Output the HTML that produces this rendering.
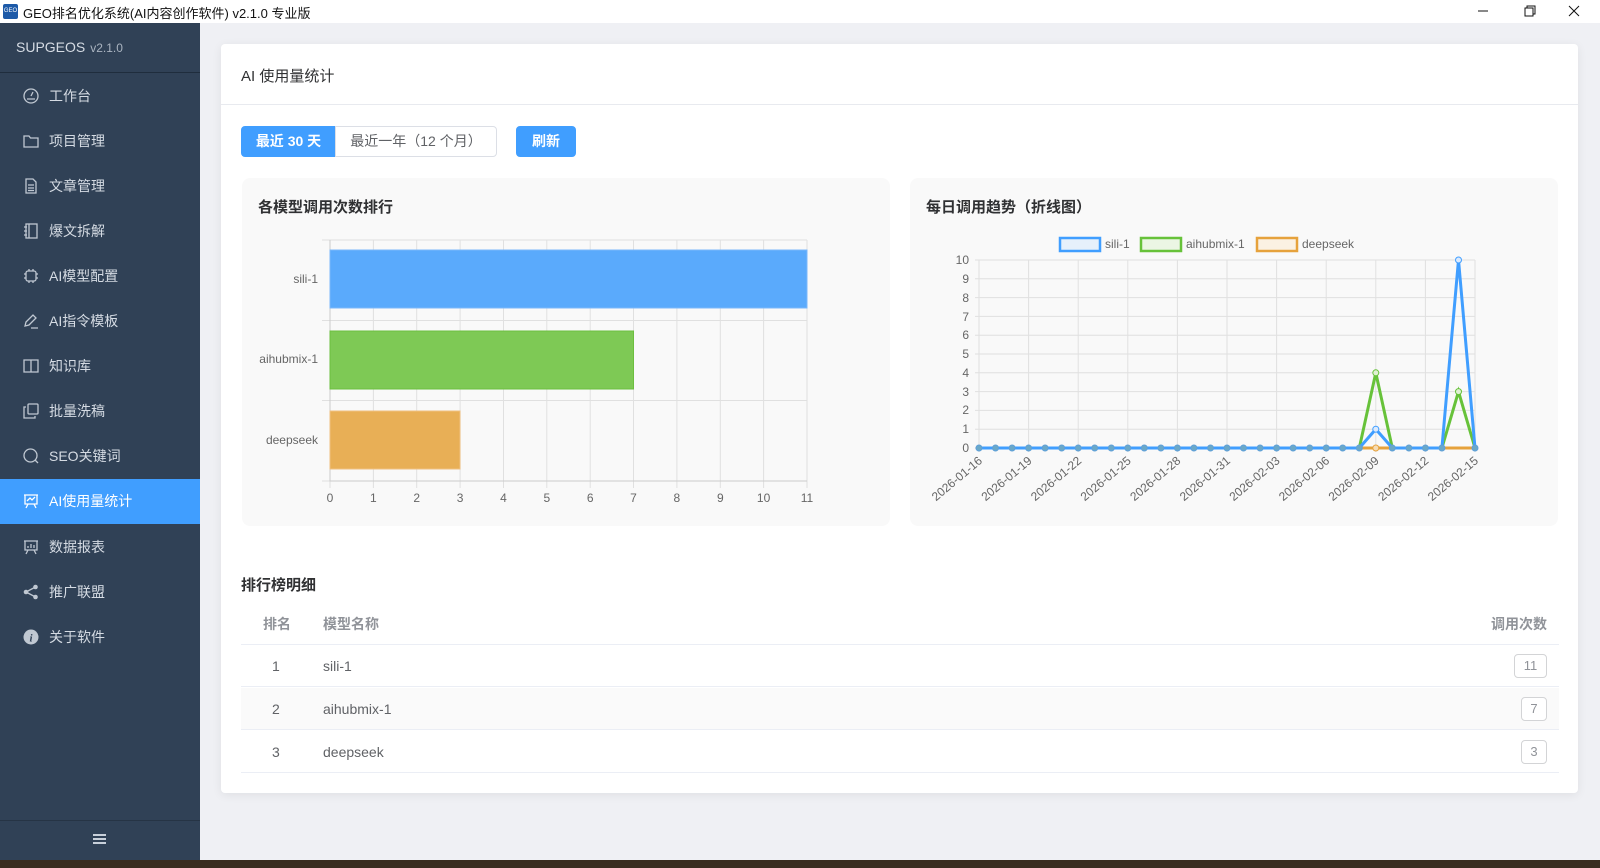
<!DOCTYPE html>
<html><head><meta charset="utf-8">
<style>
*{margin:0;padding:0;box-sizing:border-box}
body{width:1600px;height:868px;overflow:hidden;background:#eff0f4;font-family:"Liberation Sans","Noto Sans CJK SC",sans-serif;position:relative}
.tb{position:absolute;left:0;top:0;width:1600px;height:23px;background:#fff;font-size:13px;color:#111}
.tb .ic{position:absolute;left:3px;top:4px;width:15px;height:15px;background:#1d5aa8;border-radius:2px;color:#fff;font-size:6px;line-height:15px;text-align:center}
.tb .t{position:absolute;left:23px;top:3px}
.side{position:absolute;left:0;top:23px;width:200px;height:837px;background:#304156}
.brand{position:absolute;left:16px;top:16px;color:#d5dbe3;font-size:14px}
.brand span{font-size:12px;color:#aab4c0;margin-left:5px}
.sdiv{position:absolute;left:0;top:49px;width:200px;height:1px;background:#1f2d3d}
.mi{position:absolute;left:0;width:200px;height:45px;color:#d5dbe3;font-size:14px;line-height:45px;padding-left:49px}
.mi svg{position:absolute;left:23px;top:14px}
.mi.act{background:#409eff;color:#fff}
.bot{position:absolute;left:0;top:797px;width:200px;height:1px;background:#263445}
.ham{position:absolute;left:93px;top:811px;width:13px}
.ham i{display:block;height:2px;background:#c8d0da;margin-bottom:2px}
.task{position:absolute;left:0;top:860px;width:1600px;height:8px;background:#3a2c20}
.card{position:absolute;left:221px;top:44px;width:1357px;height:749px;background:#fff;border-radius:4px;box-shadow:0 2px 10px rgba(0,0,0,.07)}
.ch{position:absolute;left:20px;top:21px;font-size:15px;color:#303133}
.cdiv{position:absolute;left:0;top:60px;width:1357px;height:1px;background:#e8eaef}
.btn{position:absolute;top:126px;height:31px;font-size:14px;line-height:29px;text-align:center;border:1px solid #dcdfe6}
.panel{position:absolute;top:178px;width:648px;height:348px;background:#f9f9f9;border-radius:8px}
.pt{position:absolute;left:16px;top:18px;font-size:15px;font-weight:bold;color:#303133}
.row{position:absolute;left:241px;width:1318px;height:42px;border-bottom:1px solid #ebeef5;font-size:14px;color:#606266;line-height:42px}
.bd{position:absolute;right:12px;top:9px;height:24px;border:1px solid #d3d4d6;border-radius:4px;font-size:13px;color:#909399;line-height:22px;text-align:center;background:#fff}
</style></head><body>
<div class="tb"><div class="ic">GEO</div><div class="t">GEO排名优化系统(AI内容创作软件) v2.1.0 专业版</div>
<svg style="position:absolute;left:1470px;top:0" width="130" height="23"><line x1="8" y1="11" x2="18" y2="11" stroke="#111"/><rect x="55" y="8" width="8" height="8" fill="none" stroke="#111"/><path d="M57 8V6h8v8h-2" fill="none" stroke="#111"/><path d="M99 6l10 10M109 6l-10 10" stroke="#111"/></svg></div>

<div class="side">
<div class="brand">SUPGEOS<span>v2.1.0</span></div>
<div class="sdiv"></div>
<div class="mi" style="top:51px"><svg width="16" height="16" fill="none" stroke="#c0c8d2" stroke-width="1.3"><circle cx="8" cy="8" r="7"/><path d="M8 8l2-4M4 11h8"/></svg>工作台</div>
<div class="mi" style="top:96px"><svg width="16" height="16" fill="none" stroke="#c0c8d2" stroke-width="1.3"><path d="M1 3h5l1.5 2H15v9H1z"/></svg>项目管理</div>
<div class="mi" style="top:141px"><svg width="16" height="16" fill="none" stroke="#c0c8d2" stroke-width="1.3"><path d="M3 1h7l3 3v11H3zM5 7h6M5 10h6M5 12.5h6"/></svg>文章管理</div>
<div class="mi" style="top:186px"><svg width="16" height="16" fill="none" stroke="#c0c8d2" stroke-width="1.3"><rect x="3" y="1" width="11" height="14"/><path d="M6 1v14M1 4h3M1 8h3M1 12h3"/></svg>爆文拆解</div>
<div class="mi" style="top:231px"><svg width="16" height="16" fill="none" stroke="#c0c8d2" stroke-width="1.3"><rect x="3" y="3" width="10" height="10" rx="2"/><path d="M6 1v2M10 1v2M6 13v2M10 13v2M1 6h2M1 10h2M13 6h2M13 10h2"/></svg>AI模型配置</div>
<div class="mi" style="top:276px"><svg width="16" height="16" fill="none" stroke="#c0c8d2" stroke-width="1.3"><path d="M2 13l1-4 7-7 3 3-7 7zM8 15h7"/></svg>AI指令模板</div>
<div class="mi" style="top:321px"><svg width="16" height="16" fill="none" stroke="#c0c8d2" stroke-width="1.3"><path d="M1 2h14v12H1zM8 2v12"/></svg>知识库</div>
<div class="mi" style="top:366px"><svg width="16" height="16" fill="none" stroke="#c0c8d2" stroke-width="1.3"><rect x="5" y="1" width="10" height="10" rx="1"/><path d="M3 4H1v11h11v-2"/></svg>批量洗稿</div>
<div class="mi" style="top:411px"><svg width="16" height="16" fill="none" stroke="#c0c8d2" stroke-width="1.3"><circle cx="7.5" cy="7.5" r="6.5"/><path d="M12 12l3 3"/></svg>SEO关键词</div>
<div class="mi act" style="top:456px"><svg width="16" height="16" fill="none" stroke="#fff" stroke-width="1.3"><path d="M1 2h14M2 2v9h12V2M5 11l-2 4M11 11l2 4M4 8l3-3 2 2 3-3"/></svg>AI使用量统计</div>
<div class="mi" style="top:502px"><svg width="16" height="16" fill="none" stroke="#c0c8d2" stroke-width="1.3"><path d="M1 2h14M2 2v9h12V2M5 11l-2 4M11 11l2 4M5 9V7M8 9V5M11 9V6"/></svg>数据报表</div>
<div class="mi" style="top:547px"><svg width="16" height="16" fill="#c0c8d2"><circle cx="12.5" cy="3" r="2.3"/><circle cx="3" cy="8" r="2.3"/><circle cx="12.5" cy="13" r="2.3"/><path d="M3 8L12.5 3M3 8l9.5 5" stroke="#c0c8d2" stroke-width="1.3"/></svg>推广联盟</div>
<div class="mi" style="top:592px"><svg width="16" height="16"><circle cx="8" cy="8" r="7.5" fill="#c0c8d2"/><text x="8" y="12.5" font-size="11" font-weight="bold" font-style="italic" text-anchor="middle" fill="#304156" font-family="Liberation Serif">i</text></svg>关于软件</div>
<div class="bot"></div>
<div class="ham"><i></i><i></i><i></i></div>
</div>
<div class="task"></div>

<div class="card"><div class="ch">AI 使用量统计</div><div class="cdiv"></div></div>
<div class="btn" style="left:241px;width:95px;background:#409eff;border-color:#409eff;color:#fff;border-radius:4px 0 0 4px;font-weight:bold">最近 30 天</div>
<div class="btn" style="left:335px;width:162px;background:#fff;color:#606266;border-radius:0 4px 4px 0">最近一年（12 个月）</div>
<div class="btn" style="left:516px;width:60px;background:#409eff;border-color:#409eff;color:#fff;border-radius:4px;font-weight:bold">刷新</div>

<div class="panel" style="left:242px"><div class="pt">各模型调用次数排行</div></div>
<div class="panel" style="left:910px"><div class="pt">每日调用趋势（折线图）</div></div>

<svg style="position:absolute;left:0;top:0" width="1600" height="868" font-family="Liberation Sans, sans-serif">
<g stroke="#e0e0e0" stroke-width="1">
<path d="M330 240V488M373.4 240V488M416.7 240V488M460.1 240V488M503.5 240V488M546.8 240V488M590.2 240V488M633.5 240V488M676.9 240V488M720.3 240V488M763.6 240V488M807 240V488"/>
<path d="M322 240H807M322 320.5H807M322 400.5H807M322 481H807"/>
</g>
<path d="M330 240V481H807" stroke="#ccc" fill="none"/>
<rect x="330" y="250" width="477" height="58" fill="#5aaafc" stroke="#7ab8fa"/>
<rect x="330" y="331" width="303.5" height="58" fill="#7ec955" stroke="#6cbf3f"/>
<rect x="330" y="411" width="130" height="58" fill="#e8af56" stroke="#f0c080"/>
<g font-size="12" fill="#666" text-anchor="end"><text x="318" y="283">sili-1</text><text x="318" y="363">aihubmix-1</text><text x="318" y="444">deepseek</text></g>
<g font-size="12" fill="#666" text-anchor="middle"><text x="330" y="502">0</text><text x="373.4" y="502">1</text><text x="416.7" y="502">2</text><text x="460.1" y="502">3</text><text x="503.5" y="502">4</text><text x="546.8" y="502">5</text><text x="590.2" y="502">6</text><text x="633.5" y="502">7</text><text x="676.9" y="502">8</text><text x="720.3" y="502">9</text><text x="763.6" y="502">10</text><text x="807" y="502">11</text></g>

<g font-size="12" fill="#666">
<rect x="1060" y="238" width="40" height="13" fill="#e6f0fb" stroke="#409eff" stroke-width="2.5"/><text x="1105" y="248">sili-1</text>
<rect x="1141" y="238" width="40" height="13" fill="#ebf6e4" stroke="#67c23a" stroke-width="2.5"/><text x="1186" y="248">aihubmix-1</text>
<rect x="1257" y="238" width="40" height="13" fill="#fbf1e3" stroke="#e6a23c" stroke-width="2.5"/><text x="1302" y="248">deepseek</text>
</g>
<g stroke="#e0e0e0">
<path d="M975 260H1475M975 278.8H1475M975 297.6H1475M975 316.4H1475M975 335.2H1475M975 354H1475M975 372.8H1475M975 391.6H1475M975 410.4H1475M975 429.2H1475"/>
<path d="M979 260V452M1028.6 260V452M1078.2 260V452M1127.8 260V452M1177.4 260V452M1227 260V452M1276.6 260V452M1326.2 260V452M1375.8 260V452M1425.4 260V452M1475 260V452"/>
</g>
<path d="M975 448H1475" stroke="#ccc"/>
<g font-size="12" fill="#666" text-anchor="end"><text x="969" y="264">10</text><text x="969" y="283">9</text><text x="969" y="302">8</text><text x="969" y="321">7</text><text x="969" y="339">6</text><text x="969" y="358">5</text><text x="969" y="377">4</text><text x="969" y="396">3</text><text x="969" y="414">2</text><text x="969" y="433">1</text><text x="969" y="452">0</text></g>
<g font-size="12" fill="#666" text-anchor="end">
<text transform="translate(983,462) rotate(-40)">2026-01-16</text>
<text transform="translate(1032.6,462) rotate(-40)">2026-01-19</text>
<text transform="translate(1082.2,462) rotate(-40)">2026-01-22</text>
<text transform="translate(1131.8,462) rotate(-40)">2026-01-25</text>
<text transform="translate(1181.4,462) rotate(-40)">2026-01-28</text>
<text transform="translate(1231,462) rotate(-40)">2026-01-31</text>
<text transform="translate(1280.6,462) rotate(-40)">2026-02-03</text>
<text transform="translate(1330.2,462) rotate(-40)">2026-02-06</text>
<text transform="translate(1379.8,462) rotate(-40)">2026-02-09</text>
<text transform="translate(1429.4,462) rotate(-40)">2026-02-12</text>
<text transform="translate(1479,462) rotate(-40)">2026-02-15</text>
</g>
<polyline points="979,448 1359.3,448 1375.8,448 1392.3,448 1475,448" fill="none" stroke="#e6a23c" stroke-width="3"/>
<polyline points="979,448 1359.3,448 1375.8,372.8 1392.3,448 1441.9,448 1458.5,391.6 1475,448" fill="none" stroke="#67c23a" stroke-width="3"/>
<polyline points="979,448 1359.3,448 1375.8,429.2 1392.3,448 1441.9,448 1458.5,260 1475,448" fill="none" stroke="#409eff" stroke-width="3"/>
<g fill="#6aa8c8" stroke="#5fa0d8" stroke-width="1">
<circle cx="979" cy="448" r="3"/><circle cx="995.5" cy="448" r="3"/><circle cx="1012.1" cy="448" r="3"/><circle cx="1028.6" cy="448" r="3"/><circle cx="1045.1" cy="448" r="3"/><circle cx="1061.7" cy="448" r="3"/><circle cx="1078.2" cy="448" r="3"/><circle cx="1094.7" cy="448" r="3"/><circle cx="1111.3" cy="448" r="3"/><circle cx="1127.8" cy="448" r="3"/><circle cx="1144.3" cy="448" r="3"/><circle cx="1160.9" cy="448" r="3"/><circle cx="1177.4" cy="448" r="3"/><circle cx="1193.9" cy="448" r="3"/><circle cx="1210.5" cy="448" r="3"/><circle cx="1227" cy="448" r="3"/><circle cx="1243.5" cy="448" r="3"/><circle cx="1260.1" cy="448" r="3"/><circle cx="1276.6" cy="448" r="3"/><circle cx="1293.1" cy="448" r="3"/><circle cx="1309.7" cy="448" r="3"/><circle cx="1326.2" cy="448" r="3"/><circle cx="1342.7" cy="448" r="3"/><circle cx="1359.3" cy="448" r="3"/><circle cx="1392.3" cy="448" r="3"/><circle cx="1408.9" cy="448" r="3"/><circle cx="1425.4" cy="448" r="3"/><circle cx="1441.9" cy="448" r="3"/><circle cx="1475" cy="448" r="3"/>
</g>
<circle cx="1375.8" cy="448" r="3" fill="#f6dcb4" stroke="#e6a23c"/>
<circle cx="1375.8" cy="372.8" r="3" fill="#e0f0d4" stroke="#67c23a"/>
<circle cx="1458.5" cy="391.6" r="3" fill="#e0f0d4" stroke="#67c23a"/>
<circle cx="1375.8" cy="429.2" r="3" fill="#dbeafe" stroke="#409eff"/>
<circle cx="1458.5" cy="260" r="3" fill="#dbeafe" stroke="#409eff"/>
</svg>

<div style="position:absolute;left:241px;top:574px;font-size:15px;font-weight:bold;color:#303133">排行榜明细</div>
<div class="row" style="top:603px;color:#909399;font-weight:bold"><span style="position:absolute;left:22px">排名</span><span style="position:absolute;left:82px">模型名称</span><span style="position:absolute;right:12px">调用次数</span></div>
<div class="row" style="top:645px"><span style="position:absolute;left:31px">1</span><span style="position:absolute;left:82px">sili-1</span><div class="bd" style="width:33px">11</div></div>
<div class="row" style="top:688px;background:#fafafa"><span style="position:absolute;left:31px">2</span><span style="position:absolute;left:82px">aihubmix-1</span><div class="bd" style="width:26px">7</div></div>
<div class="row" style="top:731px"><span style="position:absolute;left:31px">3</span><span style="position:absolute;left:82px">deepseek</span><div class="bd" style="width:26px">3</div></div>
</body></html>
